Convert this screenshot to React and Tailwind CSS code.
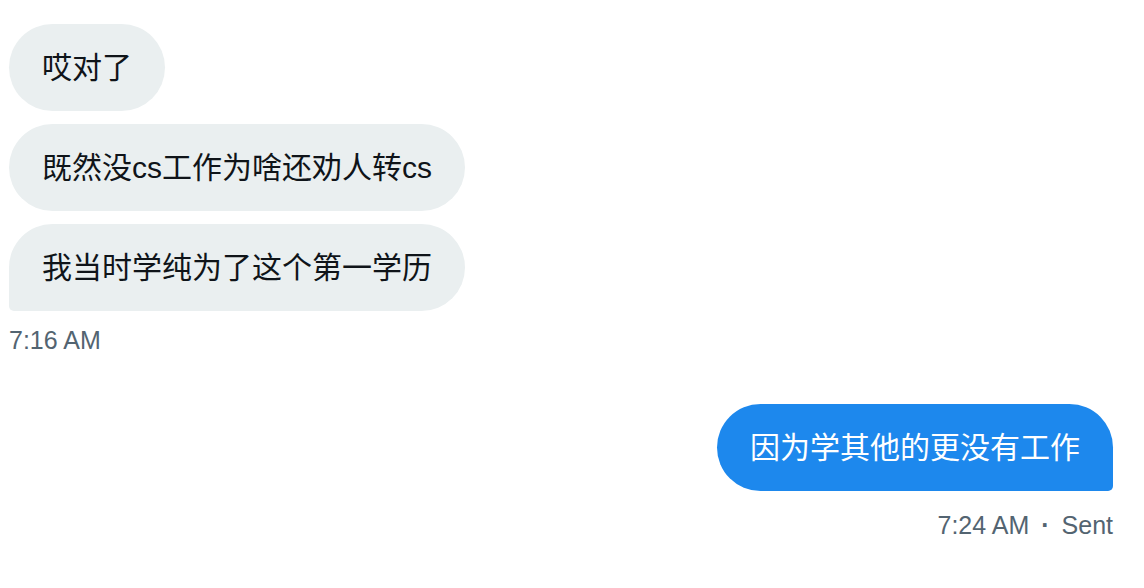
import React from 'react';

const received = ['哎对了', '既然没cs工作为啥还劝人转cs', '我当时学纯为了这个第一学历'];

export default function App() {
  const font = { fontFamily: '"Liberation Sans", "Noto Sans CJK SC", sans-serif' };
  return (
    <div className="min-h-screen w-full bg-white pl-[9px] pr-[31px] pt-[24px]" style={font}>
      {/* received group */}
      <div className="flex flex-col items-start gap-[13px]">
        {received.map((msg, i) => (
          <div
            key={i}
            className={
              i === received.length - 1
                ? 'bg-[#eaeff0] text-[#0f1419] text-[30px] leading-[41px] px-[33px] py-[23px] rounded-[44px] rounded-bl-[5px]'
                : 'bg-[#eaeff0] text-[#0f1419] text-[30px] leading-[41px] px-[33px] py-[23px] rounded-[44px]'
            }
          >
            {msg}
          </div>
        ))}
      </div>
      <div className="mt-[14px] text-[25px] leading-[30px] text-[#536471]">7:16 AM</div>

      {/* sent group */}
      <div className="mt-[49px] flex flex-col items-end">
        <div className="bg-[#1d88ed] text-white text-[30px] leading-[41px] px-[33px] py-[23px] rounded-[44px] rounded-br-[5px]">
          因为学其他的更没有工作
        </div>
        <div className="mt-[19px] text-[25px] leading-[30px] text-[#536471]">
          7:24 AM<span className="mx-[12px] font-bold">·</span>Sent
        </div>
      </div>
    </div>
  );
}
